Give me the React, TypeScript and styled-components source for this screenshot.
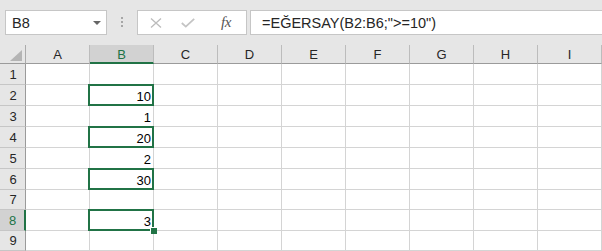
import styled, { createGlobalStyle } from 'styled-components';

const GREEN = '#217346';
const COLUMNS = ['A', 'B', 'C', 'D', 'E', 'F', 'G', 'H', 'I'];
const ROW_HEIGHTS = [21, 21, 21, 21, 21, 21, 20, 21, 20];
const ACTIVE = { col: 'B', row: 8 };

const values: Record<string, string> = {
  B2: '10',
  B3: '1',
  B4: '20',
  B5: '2',
  B6: '30',
  B8: '3',
};
const boxed = ['B2', 'B4', 'B6', 'B8'];

const GlobalStyle = createGlobalStyle`
  html, body {
    margin: 0;
    padding: 0;
    background: #fff;
    overflow: hidden;
  }
  * {
    box-sizing: border-box;
  }
`;

const Window = styled.div`
  width: 602px;
  height: 251px;
  overflow: hidden;
  font-family: 'Liberation Sans', Arial, sans-serif;
`;

const Toolbar = styled.div`
  height: 45px;
  background: #e6e6e6;
  display: flex;
  align-items: flex-start;
  padding: 10px 0 0 5px;
`;

const NameBox = styled.div`
  width: 102px;
  height: 25px;
  background: #fff;
  border: 1px solid #c6c6c6;
  display: flex;
  align-items: center;
  justify-content: space-between;
  padding: 0 5px 0 6px;
  font-size: 14.5px;
  color: #262626;
`;

const DropArrow = styled.span`
  width: 0;
  height: 0;
  border-left: 4px solid transparent;
  border-right: 4px solid transparent;
  border-top: 4px solid #666;
  margin-top: 1px;
`;

const Grip = styled.div`
  margin: 7px 0 0 14px;
  display: flex;
  flex-direction: column;
  gap: 2px;

  & > span {
    width: 2px;
    height: 2px;
    background: #a6a6a6;
  }
`;

const ButtonsBox = styled.div`
  margin-left: 14px;
  width: 110px;
  height: 25px;
  background: #fff;
  border: 1px solid #c6c6c6;
  display: flex;
  align-items: center;
`;

const IconButton = styled.span<{ $ml: number }>`
  margin-left: ${({ $ml }) => $ml}px;
  display: flex;
  align-items: center;
  justify-content: center;
`;

const Fx = styled.span`
  font-family: 'Liberation Serif', 'Times New Roman', serif;
  font-style: italic;
  font-size: 15px;
  color: #555;
  letter-spacing: -0.5px;
  margin-top: -1px;
`;

const FormulaBar = styled.div`
  margin-left: 3px;
  flex: 1;
  height: 25px;
  background: #fff;
  border: 1px solid #c6c6c6;
  border-right: none;
  display: flex;
  align-items: center;
  padding-left: 11px;
  font-size: 14.5px;
  color: #262626;
  white-space: nowrap;
`;

const Sheet = styled.div`
  display: grid;
  grid-template-columns: 26px repeat(9, 64px);
  grid-template-rows: 19px ${ROW_HEIGHTS.map((h) => `${h}px`).join(' ')};
  font-size: 13px;
`;

const Corner = styled.div`
  background: #e6e6e6;
  border-right: 1px solid #ababab;
  border-bottom: 1px solid #9b9b9b;
  display: flex;
  align-items: flex-end;
  justify-content: flex-end;
  padding: 0 3px 2px 0;
`;

const ColHeader = styled.div<{ $selected?: boolean }>`
  background: ${({ $selected }) => ($selected ? '#d2d2d2' : '#e6e6e6')};
  border-right: 1px solid #bcbcbc;
  border-bottom: ${({ $selected }) => ($selected ? `2px solid ${GREEN}` : '1px solid #9b9b9b')};
  display: flex;
  align-items: center;
  justify-content: center;
  padding-top: 1px;
  color: ${({ $selected }) => ($selected ? GREEN : '#262626')};
`;

const RowHeader = styled.div<{ $selected?: boolean }>`
  background: ${({ $selected }) => ($selected ? '#d2d2d2' : '#e6e6e6')};
  border-right: ${({ $selected }) => ($selected ? `2px solid ${GREEN}` : '1px solid #9b9b9b')};
  border-bottom: 1px solid #c6c6c6;
  display: flex;
  align-items: center;
  justify-content: center;
  padding-left: 1px;
  color: ${({ $selected }) => ($selected ? GREEN : '#262626')};
`;

const Cell = styled.div<{ $boxed?: boolean }>`
  position: relative;
  border-right: 1px solid #d4d4d4;
  border-bottom: 1px solid #d4d4d4;
  display: flex;
  align-items: flex-end;
  justify-content: flex-end;
  padding: 0 2px 1px 0;
  line-height: 15px;
  color: #000;

  ${({ $boxed }) =>
    $boxed &&
    `
    &::after {
      content: '';
      position: absolute;
      left: -2px;
      top: -1px;
      right: -1px;
      bottom: -1px;
      border: 2px solid ${GREEN};
      pointer-events: none;
    }
  `}
`;

const FillHandle = styled.span`
  position: absolute;
  right: -4px;
  bottom: -4px;
  width: 7px;
  height: 7px;
  background: ${GREEN};
  border: 1px solid #fff;
  border-right: none;
  border-bottom: none;
  z-index: 2;
`;

function App() {
  return (
    <Window>
      <GlobalStyle />
      <Toolbar>
        <NameBox>
          <span>B8</span>
          <DropArrow />
        </NameBox>
        <Grip>
          <span />
          <span />
          <span />
        </Grip>
        <ButtonsBox>
          <IconButton $ml={12}>
            <svg width="12" height="10" viewBox="0 0 12 10">
              <path d="M1 0.5 L11 9.5 M11 0.5 L1 9.5" stroke="#bcbcbc" strokeWidth="1.3" fill="none" />
            </svg>
          </IconButton>
          <IconButton $ml={19}>
            <svg width="14" height="10" viewBox="0 0 14 10">
              <path d="M0.8 5 L4.8 8.6 L13.2 0.8" stroke="#c4c4c4" strokeWidth="1.8" fill="none" />
            </svg>
          </IconButton>
          <IconButton $ml={26}>
            <Fx>fx</Fx>
          </IconButton>
        </ButtonsBox>
        <FormulaBar>=EĞERSAY(B2:B6;"&gt;=10")</FormulaBar>
      </Toolbar>

      <Sheet>
        <Corner>
          <svg width="12" height="11" viewBox="0 0 12 11">
            <polygon points="12,0 12,11 0,11" fill="#b4b4b4" />
          </svg>
        </Corner>
        {COLUMNS.map((c) => (
          <ColHeader key={c} $selected={c === ACTIVE.col}>
            {c}
          </ColHeader>
        ))}
        {ROW_HEIGHTS.map((_, i) => {
          const row = i + 1;
          return [
            <RowHeader key={`h${row}`} $selected={row === ACTIVE.row}>
              {row}
            </RowHeader>,
            ...COLUMNS.map((c) => {
              const ref = `${c}${row}`;
              const isActive = c === ACTIVE.col && row === ACTIVE.row;
              return (
                <Cell key={ref} $boxed={boxed.includes(ref)}>
                  {values[ref]}
                  {isActive && <FillHandle />}
                </Cell>
              );
            }),
          ];
        })}
      </Sheet>
    </Window>
  );
}

export default App;
